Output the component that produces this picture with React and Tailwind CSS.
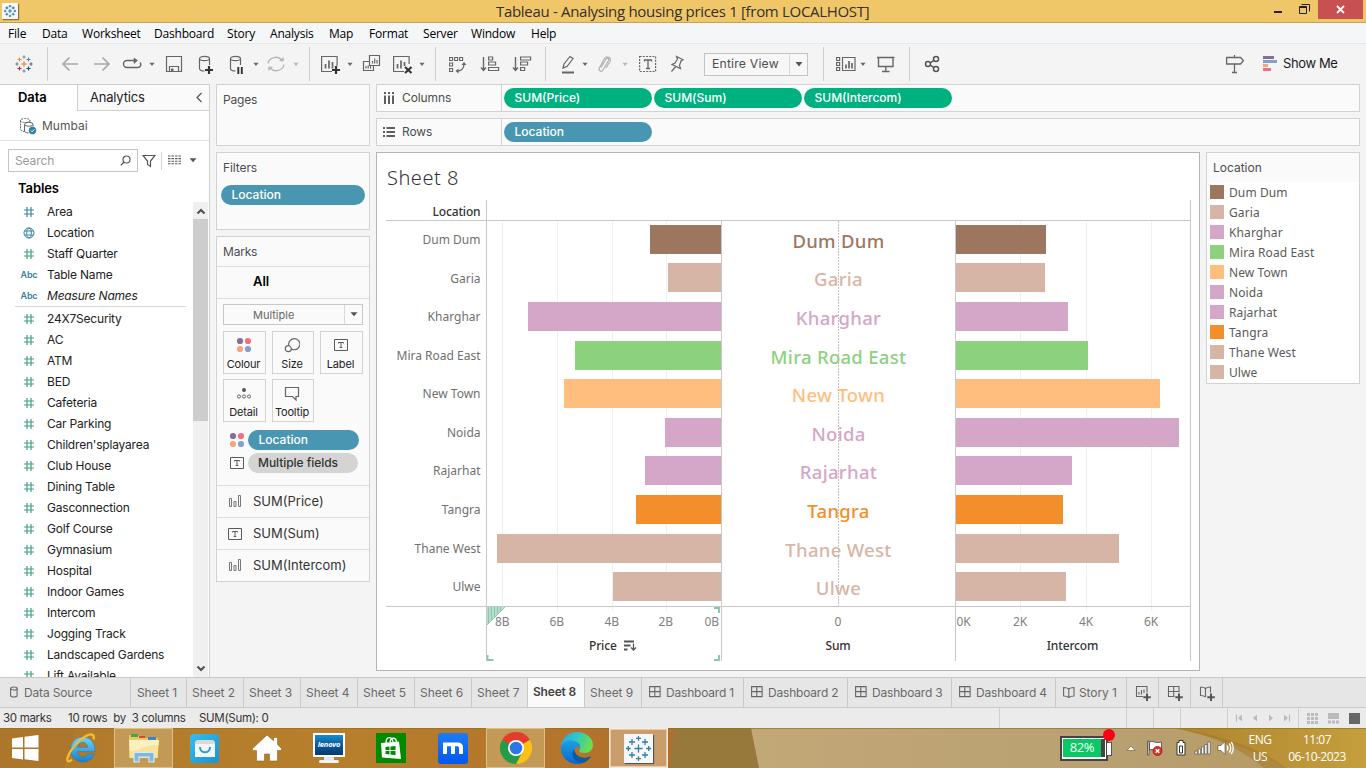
import React from "react";

const UI = "font-['Inter','Liberation_Sans',sans-serif]";
const SEGOE = "font-['Open_Sans','Noto_Sans',sans-serif]";

function Svg({ w = 20, h = 20, className = "", children, ...rest }) {
  return (
    <svg
      width={w}
      height={h}
      viewBox={`0 0 ${w} ${h}`}
      fill="none"
      stroke="#666"
      strokeWidth="1.2"
      className={`shrink-0 ${className}`}
      {...rest}
    >
      {children}
    </svg>
  );
}

const PLUS_POINTS = [
  [10, 10, 2.8],
  [10, 3, 1.7],
  [10, 17, 1.7],
  [3, 10, 1.7],
  [17, 10, 1.7],
  [5.5, 5.5, 2.1],
  [14.5, 5.5, 2.1],
  [5.5, 14.5, 2.1],
  [14.5, 14.5, 2.1],
];
const LOGO_COLORS = ["#e8762c", "#7199a6", "#7d8bb5", "#5b879b", "#5b6591", "#eb912c", "#59879b", "#c72035", "#1f447e"];

function TableauMark({ size = 20, color, className = "", thick = 1.1 }) {
  return (
    <svg width={size} height={size} viewBox="0 0 20 20" fill="none" strokeWidth={thick} className={`shrink-0 ${className}`}>
      {PLUS_POINTS.map(([x, y, r], i) => (
        <path key={i} d={`M${x - r} ${y}H${x + r}M${x} ${y - r}V${y + r}`} stroke={color || LOGO_COLORS[i]} />
      ))}
    </svg>
  );
}

function Caret({ className = "", color = "#666" }) {
  return (
    <svg width="8" height="20" viewBox="0 0 8 20" className={`shrink-0 ${className}`}>
      <path d="M1.5 8.8h5L4 12z" fill={color} />
    </svg>
  );
}

function Sep({ className = "" }) {
  return <div className={`h-[34px] w-px shrink-0 bg-[#cfcfcf] ${className}`} />;
}

function TitleBar() {
  return (
    <div className={`flex h-[23px] items-start border-b border-[#c9a251] bg-[#f0c768] ${SEGOE}`}>
      <div className="mt-[3px] ml-[2px] flex h-4 w-4 items-center justify-center bg-[#f7f7f7] shadow-[1px_1px_1px_#8a7038]">
        <TableauMark size={14} color="#2c7fb0" thick={1.5} />
      </div>
      <div className="ml-[478px] w-[376px] text-[15px] leading-[23px] tracking-[-0.31px] whitespace-nowrap text-[#33302a]">
        Tableau - Analysing housing prices 1 [from LOCALHOST]
      </div>
      <div className="mt-[11px] ml-[402px] h-[2px] w-2 bg-[#222]" />
      <Svg w={11} h={11} className="mt-1 ml-[17px]" stroke="#222" strokeWidth="1">
        <path d="M.5 2.5h7v7h-7zM.5 3.5h7M2.5 .5h8v7" />
      </Svg>
      <div className="ml-[8px] flex h-[19px] w-[45px] items-center justify-center bg-[#c75050]">
        <Svg w={9} h={9} stroke="#fff" strokeWidth="1.8">
          <path d="M1 1l7 7M8 1L1 8" />
        </Svg>
      </div>
    </div>
  );
}

function MenuBar() {
  const items = [
    ["File", "w-[34px]"],
    ["Data", "w-[40px]"],
    ["Worksheet", "w-[72px]"],
    ["Dashboard", "w-[73px]"],
    ["Story", "w-[43px]"],
    ["Analysis", "w-[59px]"],
    ["Map", "w-[40px]"],
    ["Format", "w-[54px]"],
    ["Server", "w-[48px]"],
    ["Window", "w-[60px]"],
    ["Help", "w-[40px]"],
  ];
  return (
    <div className={`flex h-[21px] items-center border-b border-[#e8e8e8] bg-[#f5f6f7] pt-[2px] pl-2 text-[12px] tracking-[-0.2px] text-black ${SEGOE}`}>
      {items.map(([t, w]) => (
        <div key={t} className={`${w} whitespace-nowrap`}>
          {t}
        </div>
      ))}
    </div>
  );
}

function Toolbar() {
  return (
    <div className="flex h-10 items-center bg-[#f4f4f4]">
      <TableauMark size={20} className="ml-[14px]" />
      <Sep className="ml-[13px]" />
      <Svg className="ml-3" stroke="#a9a9a9" strokeWidth="1.7">
        <path d="M18 10H3M9.5 3.5L3 10l6.5 6.5" />
      </Svg>
      <Svg className="ml-3" stroke="#a9a9a9" strokeWidth="1.7">
        <path d="M2 10h15M10.500 3.500L17 10l-6.500 6.500" />
      </Svg>
      <Svg className="ml-[10px]" strokeWidth="1.4">
        <path d="M14 6.500H5a3.500 3.500 0 0 0 0 7h10.500a3 3 0 0 0 2.500-5" />
        <path d="M12 4l3.500 2.500L12 9.500z" fill="#666" strokeWidth=".6" />
      </Svg>
      <Caret className="ml-[6px]" />
      <Svg className="ml-2">
        <path d="M2.500 2.500h15v15h-15zM5.500 17v-4.500h9V17" />
        <path d="M7 14.500h2.500V17H7z" fill="#666" stroke="none" />
      </Svg>
      <Svg className="ml-3">
        <path d="M3.500 5v9.500c0 1.500 2 2.500 5 2.500M13.500 5v6" />
        <ellipse cx="8.500" cy="4.500" rx="5" ry="2.200" />
        <path d="M13 12v8M9 16h8" stroke="#333" strokeWidth="2.200" />
      </Svg>
      <Svg className="ml-[11px]">
        <path d="M3.500 5v9.500c0 1.500 2 2.500 5 2.500M13.500 5v6" />
        <ellipse cx="8.500" cy="4.500" rx="5" ry="2.200" />
        <path d="M11.300 13v7M14.800 13v7" stroke="#333" strokeWidth="1.900" />
      </Svg>
      <Caret className="ml-[5px]" />
      <Svg className="ml-[6px]" stroke="#b5b5b5" strokeWidth="1.300">
        <path d="M2 9.500a8 7.500 0 0 1 14-3.500M18 10.500a8 7.500 0 0 1-14 3.500" />
        <path d="M17.500 3.500v3.500h-4zM2.500 16.500V13h4z" fill="#b5b5b5" strokeWidth=".5" />
      </Svg>
      <Caret className="ml-[6px]" color="#b5b5b5" />
      <Sep className="ml-[9px]" />
      <Svg className="ml-[11px]">
        <path d="M11 17.500H.600V2.500h15.500V12" />
        <path d="M4.500 14.500V10M8 14.500V6.500M11.500 14.500V8" strokeWidth="1.700" />
        <path d="M15 12v8M11 16h8" stroke="#333" strokeWidth="2.200" />
      </Svg>
      <Caret className="ml-[5px]" />
      <Svg className="ml-2">
        <path d="M7.500 1.500h10v10h-10zM7 7.500H1.500v9h10V12" />
        <path d="M10.500 9.500V7M12.700 9.500V4.500M15 9.500V6M4 14.500V12M6.200 14.500v-3M8.500 14.500V12" />
      </Svg>
      <Svg className="ml-[11px]">
        <path d="M11 17.500H.600V2.500h15.500V10" />
        <path d="M4.500 14.500V10M8 14.500V6.500M11.500 12V8" strokeWidth="1.700" />
        <path d="M12 13l6.500 6M18.500 13L12 19" stroke="#333" strokeWidth="2.100" />
      </Svg>
      <Caret className="ml-[5px]" />
      <Sep className="ml-[9px]" />
      <Svg className="ml-3">
        <path d="M1.600 3.500h3v3h-3zM6.600 3.500h3v3h-3zM11.600 3.500h3v3h-3zM1.600 9h3v3h-3zM1.600 14.500h3v3h-3z" strokeWidth="1.100" />
        <path d="M16 10c0 4-2.500 7-7 7" strokeWidth="1.300" />
        <path d="M13.500 11l2.500-3 2.500 3zM10.500 14.500L7.500 17l3 2.500z" fill="#666" stroke="none" />
      </Svg>
      <Svg className="ml-3">
        <path d="M3.500 3v13.500M1 13.500l2.500 3 2.500-3" strokeWidth="1.400" />
        <path d="M8.600 3h4v3h-4zM8.600 8h7v3h-7zM8.600 13.500h10v3h-10z" />
      </Svg>
      <Svg className="ml-3">
        <path d="M3.500 3v13.500M1 13.500l2.500 3 2.500-3" strokeWidth="1.400" />
        <path d="M8.600 3h10v3h-10zM8.600 8h7v3h-7zM8.600 13.500h4v3h-4z" />
      </Svg>
      <Sep className="ml-[13px]" />
      <Svg className="ml-3">
        <path d="M5 14l1-4 6-7.500 3 2-6 8zM5 14l3.500-1.500" />
        <path d="M4 18.500h12" strokeWidth="2" />
      </Svg>
      <Caret className="ml-[3px]" />
      <Svg className="ml-[6px]" stroke="#b5b5b5" strokeWidth="1.300">
        <path d="M6 13.500l5-8.500c1-1.500 3.500-.500 2.500 1.500l-5.500 9.500c-1.500 2.500-5 .500-3.700-2L9.500 4.500c2-3.200 7.500-1 5.500 3L11 14" />
      </Svg>
      <Caret className="ml-[6px]" color="#b5b5b5" />
      <Svg className="ml-[9px]">
        <path d="M1.600 2.500h16v15h-16z" strokeDasharray="2 1.200" />
        <path d="M6.500 7.500V6h7v1.500M10 6v8.500M8 14.500h4" strokeWidth="1.300" />
      </Svg>
      <Svg className="ml-[9px]">
        <path d="M9.500 2.500l6.500 3.200-2 1.300-1.500 4.500 1 3L5 10.500l3-1.500 2.500-4zM8.800 12.500L4.500 17.500" />
      </Svg>
      <div className={`ml-[17px] flex h-[23px] w-[104px] items-center border border-[#c4c4c4] bg-[#f7f7f7] text-[13px] text-[#4e4e4e] ${UI}`}>
        <div className="flex-1 pl-[7px] text-[12.200px] tracking-[0.2px] whitespace-nowrap">Entire View</div>
        <div className="flex h-full w-[18px] items-center justify-center border-l border-[#d9d9d9]">
          <svg width="8" height="5" viewBox="0 0 8 5">
            <path d="M.500 0h7L4 4.500z" fill="#555" />
          </svg>
        </div>
      </div>
      <Sep className="ml-[15px]" />
      <Svg w={22} className="ml-[11px]">
        <path d="M1.600 3.500h3v3h-3zM1.600 8.500h3v3h-3zM1.600 13.500h3v3h-3zM7.500 3.500h12.500v13H7.500z" />
        <path d="M11 14.500v-4M14 14.500V7M17 14.500V9" strokeWidth="1.700" />
      </Svg>
      <Caret className="ml-[2px]" />
      <Svg className="ml-[9px]">
        <path d="M1 3.500h17.500M2.500 3.500v9h14.500v-9M9.800 12.500v5M6 17.500h7.500" strokeWidth="1.400" />
      </Svg>
      <Sep className="ml-[13px]" />
      <Svg className="ml-3" strokeWidth="1.500" stroke="#555">
        <circle cx="6" cy="10" r="2.500" />
        <circle cx="14" cy="5" r="2.500" />
        <circle cx="14" cy="15" r="2.500" />
        <path d="M8 9l4-2.700M8 11l4 2.700" />
      </Svg>
      <Svg className="ml-[283px]" strokeWidth="1.300">
        <path d="M9.500 1v2.500M1.600 3.500h14l2.800 3-2.800 3.500h-14zM9.500 10v8.500M7 18.500h5" />
      </Svg>
      <Svg w={16} className="ml-[18px]" stroke="none">
        <path d="M0 2h11v3H0z" fill="#886d94" />
        <path d="M0 6h14v3H0z" fill="#81a1c9" />
        <path d="M0 10h5v3H0z" fill="#f4a67c" />
        <path d="M0 14h8v3H0z" fill="#f56d7e" />
      </Svg>
      <div className={`ml-1 text-[13px] tracking-[-0.4px] whitespace-nowrap text-[#1a1a1a] ${UI}`}>Show Me</div>
    </div>
  );
}

function HashIcon({ color }) {
  return (
    <Svg w={12} h={12} stroke={color} strokeWidth="1.200">
      <path d="M4 1v10M8 1v10M1 4h10M1 8h10" />
    </Svg>
  );
}

const DIMENSIONS = [
  ["Area", "hashBlue"],
  ["Location", "globe"],
  ["Staff Quarter", "hash"],
  ["Table Name", "abc"],
  ["Measure Names", "abc"],
];
const MEASURES = [
  "24X7Security",
  "AC",
  "ATM",
  "BED",
  "Cafeteria",
  "Car Parking",
  "Children'splayarea",
  "Club House",
  "Dining Table",
  "Gasconnection",
  "Golf Course",
  "Gymnasium",
  "Hospital",
  "Indoor Games",
  "Intercom",
  "Jogging Track",
  "Landscaped Gardens",
  "Lift Available",
];

function FieldRow({ name, kind }) {
  return (
    <div className="flex h-[21px] shrink-0 items-center">
      <div className="ml-[18px] flex w-[22px] justify-center">
        {kind === "hash" && <HashIcon color="#3fa37c" />}
        {kind === "hashBlue" && <HashIcon color="#3b86a3" />}
        {kind === "abc" && <span className="text-[9px] font-semibold tracking-[-0.2px] text-[#3b7f9b]">Abc</span>}
        {kind === "globe" && (
          <Svg w={12} h={12} stroke="#3b86a3" strokeWidth="1">
            <circle cx="6" cy="6" r="5" />
            <ellipse cx="6" cy="6" rx="2.300" ry="5" />
            <path d="M1.500 4h9M1.500 8h9" />
          </Svg>
        )}
      </div>
      <div className={`ml-[7px] text-[12px] tracking-[-0.2px] whitespace-nowrap text-[#222] ${name === "Measure Names" ? "italic" : ""}`}>{name}</div>
    </div>
  );
}

function DataPane() {
  return (
    <div className={`flex h-[593px] w-[210px] shrink-0 flex-col border-t border-r border-[#cfcfcf] bg-white ${UI}`}>
      <div className="flex h-[26px] shrink-0">
        <div className="w-[77px] pl-[18px] text-[13px] leading-[25px] font-semibold tracking-[-0.1px] text-black">Data</div>
        <div className="flex flex-1 items-center justify-between border-b border-l border-[#cfcfcf] bg-[#fafafa] pr-[6px] pl-3 text-[13px] tracking-[-0.2px] text-[#222]">
          Analytics
          <Svg w={8} h={12} stroke="#555" className="mb-px">
            <path d="M6.500 2L2 6.500 6.500 11" />
          </Svg>
        </div>
      </div>
      <div className="flex h-[30px] shrink-0 items-center border-b border-[#e0e0e0] pl-[19px] text-[12px] text-[#555]">
        <Svg w={18} h={18} strokeWidth="1">
          <path d="M1.500 3.500v9c0 1 2 2 4 2M11 3.500v1" strokeDasharray="2 1" />
          <ellipse cx="6.200" cy="3.500" rx="4.700" ry="2" strokeDasharray="2 1" />
          <path d="M5.500 7.500v6.500c0 1 1.500 2 4 2M14 7.500v2" />
          <ellipse cx="9.700" cy="7.300" rx="4.200" ry="2" />
          <circle cx="13.500" cy="13.500" r="3.700" fill="#2f7fa0" stroke="none" />
          <path d="M11.800 13.500l1.300 1.300 2.200-2.500" stroke="#fff" />
        </Svg>
        <span className="ml-[5px]">Mumbai</span>
      </div>
      <div className="mt-2 flex h-[23px] shrink-0 items-center pl-2">
        <div className="flex h-[23px] w-[130px] items-center justify-between border border-[#c4c4c4] pr-[6px] pl-[6px] text-[12px] tracking-[-0.1px] text-[#9a9a9a]">
          Search
          <Svg w={11} h={11} stroke="#555">
            <circle cx="6.500" cy="4.500" r="3.500" />
            <path d="M4 7L.800 10.300" />
          </Svg>
        </div>
        <Svg w={14} h={14} className="ml-1" stroke="#555">
          <path d="M1 1.500h12L8.500 7v5.500l-3-2V7z" />
        </Svg>
        <div className="ml-[5px] h-[18px] w-px bg-[#d4d4d4]" />
        <Svg w={13} h={11} className="ml-[6px]" stroke="#555" strokeWidth="1.100">
          <path d="M0 1h13M0 3.600h13M0 6.200h13M0 8.800h13" strokeDasharray="2.500 1" />
        </Svg>
        <Svg w={8} h={5} className="ml-2" stroke="none">
          <path d="M.500 .300h7L4 4.300z" fill="#555" />
        </Svg>
      </div>
      <div className="mt-[5px] h-[24px] shrink-0 pl-[18px] text-[13px] leading-[23px] font-semibold tracking-[-0.1px] text-black">Tables</div>
      <div className="flex min-h-0 flex-1">
        <div className="flex w-[193px] flex-col overflow-hidden">
          {DIMENSIONS.map(([n, k]) => (
            <FieldRow key={n} name={n} kind={k} />
          ))}
          <div className="mr-[7px] ml-[15px] mb-px h-px shrink-0 bg-[#d9d9d9]" />
          {MEASURES.map((n) => (
            <FieldRow key={n} name={n} kind="hash" />
          ))}
        </div>
        <div className="mt-px flex w-[15px] flex-col items-center bg-[#f0f0f0]">
          <div className="flex h-[17px] items-center">
            <Svg w={10} h={8} stroke="#505050" strokeWidth="2">
              <path d="M1.500 6.500L5 3l3.500 3.500" />
            </Svg>
          </div>
          <div className="h-[202px] w-full bg-[#cdcdcd]" />
          <div className="mt-auto mb-1">
            <Svg w={10} h={8} stroke="#505050" strokeWidth="2">
              <path d="M1.500 1.500L5 5l3.500-3.500" />
            </Svg>
          </div>
        </div>
      </div>
    </div>
  );
}

function ColourDots({ size = 16 }) {
  return (
    <svg width={size} height={size} viewBox="0 0 16 16" className="shrink-0">
      <circle cx="4" cy="4" r="3.100" fill="#886d94" />
      <circle cx="12" cy="4" r="3.100" fill="#f56d7e" />
      <circle cx="4" cy="12" r="3.100" fill="#f4a67c" />
      <circle cx="12" cy="12" r="3.100" fill="#81a1c9" />
    </svg>
  );
}

function TextBox() {
  return (
    <Svg w={14} h={12} stroke="#5a5a5a" strokeWidth="1">
      <path d="M.500 .500h13v11H.500z" />
      <path d="M4.500 4.500v-1h5v1M7 3.500v5M5.700 8.500h2.600" />
    </Svg>
  );
}

function MarkButton({ label, children }) {
  return (
    <div className="flex h-[43px] flex-col items-center border border-[#d2d2d2] bg-[#fafafa] pr-[2px]">
      <div className="mt-[5px] flex h-4 items-center">{children}</div>
      <div className="mt-[4px] text-[11px] leading-[15px] tracking-[-0.15px] whitespace-nowrap text-[#222]">{label}</div>
    </div>
  );
}

function BarsIcon() {
  return (
    <Svg w={14} h={14} stroke="#777" strokeWidth="1" className="mb-px">
      <path d="M1.500 4.500h2v8h-2zM6 7.500h2v5H6zM10.500 1.500h2v11h-2z" />
    </Svg>
  );
}

function MiddlePane() {
  const card = "border border-[#d2d2d2] bg-[#fafafa]";
  return (
    <div className={`ml-[6px] flex w-[154px] shrink-0 flex-col text-[#4e4e4e] ${UI}`}>
      <div className={`${card} h-[62px] pl-[6px] text-[12px] leading-[30px] tracking-[-0.2px]`}>Pages</div>
      <div className={`${card} mt-[6px] h-[78px] px-1`}>
        <div className="pl-[2px] text-[12px] leading-[30px] tracking-[-0.1px]">Filters</div>
        <div className="mt-[2px] h-5 rounded-full bg-[#4996b2] pl-[10.500px] text-[12px] leading-5 font-medium text-white">Location</div>
      </div>
      <div className={`${card} mt-[6px] h-[346px]`}>
        <div className="h-[30px] border-b border-[#dcdcdc] pl-[6px] text-[12px] leading-[30px] tracking-[-0.2px]">Marks</div>
        <div className="h-8 border-b border-[#dcdcdc] pl-9 text-[13px] leading-[29px] font-semibold text-black">All</div>
        <div className="mt-[5px] mr-[6px] ml-[6px] flex h-[21px] items-center border border-[#c8c8c8]">
          <div className="flex-1 pt-px pl-[29px] text-[11px] text-[#666]">Multiple</div>
          <div className="flex h-full w-[18px] items-center justify-center border-l border-[#d9d9d9]">
            <Svg w={8} h={5} stroke="none">
              <path d="M.500 .300h7L4 4.300z" fill="#555" />
            </Svg>
          </div>
        </div>
        <div className="mt-[6px] ml-[6px] grid grid-cols-[43px_42px_43px] gap-x-[6px] gap-y-[5px]">
          <MarkButton label="Colour">
            <ColourDots />
          </MarkButton>
          <MarkButton label="Size">
            <Svg w={16} h={16}>
              <path d="M4.800 8.300A5.600 5.600 0 1 1 7.500 12" />
              <circle cx="4.300" cy="11.700" r="3" />
            </Svg>
          </MarkButton>
          <MarkButton label="Label">
            <TextBox />
          </MarkButton>
          <MarkButton label="Detail">
            <Svg w={16} h={14} strokeWidth="1">
              <circle cx="8" cy="4" r="2" fill="#555" stroke="none" />
              <circle cx="3" cy="10.500" r="1.600" />
              <circle cx="8" cy="10.500" r="1.600" />
              <circle cx="13" cy="10.500" r="1.600" />
            </Svg>
          </MarkButton>
          <MarkButton label="Tooltip">
            <Svg w={16} h={16}>
              <path d="M1.500 2.500h13v9h-2.500v3.500L8.500 11.500h-7z" />
            </Svg>
          </MarkButton>
        </div>
        <div className="mt-[8px] flex items-center pl-3">
          <ColourDots />
          <div className="ml-[3px] h-5 w-[111px] rounded-full bg-[#4996b2] pl-[10.500px] text-[12px] leading-5 font-medium text-white">Location</div>
        </div>
        <div className="mt-[3px] flex items-center pl-[13px]">
          <TextBox />
          <div className="ml-1 h-5 w-[110px] rounded-full bg-[#d4d4d4] pl-[10px] text-[12px] leading-5 font-medium tracking-[-0.05px] text-[#333]">Multiple fields</div>
        </div>
        <div className="mt-3 text-[13px] tracking-[0px] text-[#333]">
          {[
            ["SUM(Price)", "bars"],
            ["SUM(Sum)", "text"],
            ["SUM(Intercom)", "bars"],
          ].map(([t, k]) => (
            <div key={t} className="flex h-8 items-center border-t border-[#dcdcdc] pl-[11px]">
              {k === "bars" ? <BarsIcon /> : <TextBox />}
              <span className="ml-[11px]">{t}</span>
            </div>
          ))}
        </div>
      </div>
    </div>
  );
}

function Shelf({ label, pills, className = "" }) {
  return (
    <div className={`flex h-[28px] w-[984px] border border-[#d2d2d2] bg-[#fafafa] ${className}`}>
      <div className="flex w-[125px] items-center border-r border-[#d2d2d2] pl-[6px] text-[12px] tracking-[-0.1px] text-[#4e4e4e]">
        {label === "Columns" ? (
          <Svg w={12} h={12} stroke="#5f5f5f" strokeWidth="2">
            <path d="M2 0v2M2 3.500V12M6 0v2M6 3.500V12M10 0v2M10 3.500V12" />
          </Svg>
        ) : (
          <Svg w={12} h={12} stroke="#5f5f5f" strokeWidth="2">
            <path d="M0 2h2M3.500 2H12M0 6h2M3.500 6H12M0 10h2M3.500 10H12" />
          </Svg>
        )}
        <span className="ml-[7px]">{label}</span>
      </div>
      <div className="flex items-center gap-[2px] pl-[2px]">
        {pills.map((p) => (
          <div
            key={p}
            className={`h-5 w-[148px] rounded-full pl-[10.500px] text-[12px] leading-5 font-medium text-white ${
              p === "Location" ? "bg-[#4996b2]" : "bg-[#00b180]"
            }`}
          >
            {p}
          </div>
        ))}
      </div>
    </div>
  );
}

const ROWS = [
  ["Dum Dum", "#9d7660", 650, 1046, 225],
  ["Garia", "#d7b5a6", 668, 1045, 263],
  ["Kharghar", "#d4a6c8", 528, 1068, 302],
  ["Mira Road East", "#8cd17d", 575, 1088, 341],
  ["New Town", "#ffbe7d", 564, 1160, 379],
  ["Noida", "#d4a6c8", 665, 1179, 418],
  ["Rajarhat", "#d4a6c8", 645, 1072, 456],
  ["Tangra", "#f28e2b", 636, 1063, 495],
  ["Thane West", "#d7b5a6", 497, 1119, 534],
  ["Ulwe", "#d7b5a6", 613, 1066, 572],
];

function Chart() {
  return (
    <svg width="822" height="472" viewBox="377 198 822 472" className="block font-['Noto_Sans','Open_Sans',sans-serif]">
      <g stroke="#f0f0f0" shapeRendering="crispEdges">
        {[502.5, 557.5, 612.5, 666.5, 1020.5, 1086.5, 1151.5].map((x) => (
          <path key={x} d={`M${x} 221V611`} />
        ))}
      </g>
      <g shapeRendering="crispEdges">
        {ROWS.map(([n, c, l, r, y]) => (
          <g key={n} fill={c}>
            <rect x={l} y={y} width={721 - l} height="29" />
            <rect x={956} y={y} width={r - 956} height="29" />
          </g>
        ))}
      </g>
      <path d="M838.5 221V606" stroke="#c0c0c0" strokeDasharray="2 1" />
      <g stroke="#c8c8c8" shapeRendering="crispEdges">
        <path d="M386 220.500H1190M386 606.500H1190M486.500 200V661M721.500 221V661M955.500 221V661M1190.500 200V661" />
      </g>
      <g fontSize="12" fill="#707070">
        {ROWS.map(([n, , , , y]) => (
          <text key={n} x="480.500" y={y + (n === "Garia" ? 20 : 19)} textAnchor="end">
            {n}
          </text>
        ))}
      </g>
      <g fontSize="18.500" fontWeight="500" letterSpacing=".3">
        {ROWS.map(([n, c, , , y]) => (
          <text key={n} x="838.500" y={y + 22.500} textAnchor="middle" fill={c}>
            {n}
          </text>
        ))}
      </g>
      <g fontSize="12" fill="#808080">
        <text x="495" y="626">8B</text>
        <text x="549.500" y="626">6B</text>
        <text x="604.500" y="626">4B</text>
        <text x="658.500" y="626">2B</text>
        <text x="704.500" y="626">0B</text>
        <text x="834.500" y="626">0</text>
        <text x="956.500" y="626">0K</text>
        <text x="1013" y="626">2K</text>
        <text x="1079" y="626">4K</text>
        <text x="1144" y="626">6K</text>
      </g>
      <g fontSize="12" fill="#333" fontWeight="500" letterSpacing="-.15">
        <text x="480.500" y="216" textAnchor="end">Location</text>
        <text x="589" y="650">Price</text>
        <text x="838" y="650" textAnchor="middle">Sum</text>
        <text x="1072.500" y="650" textAnchor="middle">Intercom</text>
      </g>
      <path d="M624 641.500h10M624 645.500h6.500M624 649.500h3.500" stroke="#555" strokeWidth="1.800" />
      <path d="M633.500 643.500v6M631 647.500l2.500 2.500 2.500-2.500" stroke="#555" strokeWidth="1.300" fill="none" />
      <path d="M487 607h18l-18 18z" fill="#bfe0d2" />
      <path d="M488.500 607v16M491.500 607v13M494.500 607v10M497.500 607v7M500.500 607v4" stroke="#8cc7b2" strokeWidth="1.300" />
      <path d="M505 607l-18 18" stroke="#8cc7b2" />
      <path d="M714 608h5v5M487.500 655v5h6M714 660h5v-5" fill="none" stroke="#8cc7b2" strokeWidth="2" />
    </svg>
  );
}

function Legend() {
  return (
    <div className="ml-[6px] h-[232px] w-[154px] border border-[#d2d2d2] bg-white font-['Noto_Sans','Open_Sans',sans-serif] text-[12px] text-[#5a5a5a]">
      <div className={`h-[29px] bg-[#fafafa] pl-[6px] leading-[30px] text-[#4e4e4e] ${UI}`}>Location</div>
      {ROWS.map(([n, c]) => (
        <div key={n} className="flex h-5 items-center pl-[3px]">
          <div className="h-[14px] w-[14px]" style={{ backgroundColor: c }} />
          <div className="ml-[5px] pt-[2px] tracking-[0.1px] whitespace-nowrap">{n}</div>
        </div>
      ))}
    </div>
  );
}

function Workspace() {
  return (
    <div className={`ml-[6px] flex flex-col ${UI}`}>
      <Shelf label="Columns" pills={["SUM(Price)", "SUM(Sum)", "SUM(Intercom)"]} />
      <Shelf label="Rows" pills={["Location"]} className="mt-[6px]" />
      <div className="mt-[6px] flex">
        <div className="flex h-[519px] w-[824px] flex-col border border-[#b4b4b4] bg-white">
          <div className="h-[45px] shrink-0 pl-[10px] font-['Noto_Sans','Open_Sans',sans-serif] text-[20px] leading-[49px] font-light tracking-[0.5px] text-[#333]">
            Sheet 8
          </div>
          <Chart />
        </div>
        <Legend />
      </div>
    </div>
  );
}

function GridIcon({ className = "" }) {
  return (
    <Svg w={12} h={12} className={className} stroke="#666" strokeWidth="1.100">
      <path d="M.600 .600h10.500v10H.600zM5.800 .600v10M.600 5.600h10.500" />
    </Svg>
  );
}
function BookIcon({ className = "" }) {
  return (
    <Svg w={12} h={12} className={className} stroke="#666" strokeWidth="1.100">
      <path d="M.600 1.500c2 0 3.500 0 5.200 1.500C7.500 1.500 9 1.500 11 1.500v8.500c-2 0-3.500 0-5.200 1.500C4.100 10 2.600 10 .600 10zM5.800 3v8" />
    </Svg>
  );
}

function SheetTabs() {
  const cell = "flex h-full items-center border-r border-[#c9c9c9] whitespace-nowrap";
  return (
    <div className={`flex h-[31px] border-t border-b border-[#c9c9c9] bg-[#e6e6e6] text-[12px] text-[#6a6a6a] ${UI}`}>
      <div className={`${cell} w-[131px] pl-[10px]`}>
        <Svg w={8} h={12} strokeWidth="1.100" className="mb-px">
          <path d="M.600 2.500v7c0 2 6.500 2 6.500 0v-7" />
          <ellipse cx="3.900" cy="2.500" rx="3.300" ry="1.500" />
        </Svg>
        <span className="ml-[6px] tracking-[-0.15px]">Data Source</span>
      </div>
      {[1, 2, 3, 4, 5, 6, 7, 8, 9].map((n) => (
        <div
          key={n}
          className={`${cell} ${n === 1 || n === 7 ? "w-[56px]" : "w-[57px]"} ${
            n === 8 ? "bg-[#fafafa] pb-[2px] pl-[5px] font-semibold tracking-[-0.2px] text-[#444]" : n === 1 ? "pl-[6px] tracking-[-0.15px]" : "pl-[5px] tracking-[-0.05px]"
          }`}
        >
          Sheet {n}
        </div>
      ))}
      {[1, 2, 3, 4].map((n) => (
        <div key={n} className={`${cell} ${n === 1 ? "w-[102px]" : "w-[104px]"} pl-[7px] tracking-[-0.2px]`}>
          <GridIcon className="mb-[2px]" />
          <span className="ml-[5px]">Dashboard {n}</span>
        </div>
      ))}
      <div className={`${cell} w-[71px] pl-[7px] tracking-[-0.1px]`}>
        <BookIcon className="mb-px" />
        <span className="ml-1">Story 1</span>
      </div>
      {["sheet", "dash", "story"].map((k) => (
        <div key={k} className={`${cell} w-8 justify-center`}>
          <Svg w={16} h={16} strokeWidth="1.100">
            {k === "sheet" && <path d="M8 11.500H1.500V1.500h10.500v6M4 9.500V7M6.500 9.500V5M9 8V4.500" />}
            {k === "dash" && <path d="M7.500 11.500H1.500V1.500h10.500v6M6.700 1.500v10M1.500 6.500H12" />}
            {k === "story" && <path d="M1.500 2c2 0 3.500 0 5 1.500C8 2 9.500 2 11.500 2v5.500M1.500 2v8.500c2 0 3.500 0 5 1.500M6.500 3.500V12" />}
            <path d="M12 8.500v7.500M8.300 12.200h7.500" stroke="#555" strokeWidth="2" />
          </Svg>
        </div>
      ))}
    </div>
  );
}

function StatusBar() {
  return (
    <div className={`flex h-5 bg-[#ebebeb] text-[11.500px] leading-5 tracking-[-0.3px] text-[#333] ${UI}`}>
      <div className="w-[65px] pl-[3px] whitespace-nowrap">30 marks</div>
      <div className="w-[134px] pl-[3px] whitespace-nowrap">10 rows&nbsp; by&nbsp; 3 columns</div>
      <div className="w-[801px] border-r border-[#cfcfcf]">SUM(Sum): 0</div>
      <div className="w-[127px] border-r border-[#cfcfcf]" />
      <div className="w-[27px] border-r border-[#cfcfcf]" />
      <div className="w-[27px] border-r border-[#cfcfcf]" />
      <div className="w-[47px] border-r border-[#cfcfcf]" />
      <div className="flex w-[71px] items-center gap-[8px] border-r border-[#cfcfcf] pl-[7px]">
        <Svg w={8} h={8} stroke="#bbb">
          <path d="M1.500 .500v7" />
          <path d="M7 .500v7L3 4z" fill="#bbb" stroke="none" />
        </Svg>
        <Svg w={8} h={8} stroke="none">
          <path d="M6 .500v7L2 4z" fill="#bbb" />
        </Svg>
        <Svg w={8} h={8} stroke="none">
          <path d="M2 .500v7L6 4z" fill="#bbb" />
        </Svg>
        <Svg w={8} h={8} stroke="#bbb">
          <path d="M6.500 .500v7" />
          <path d="M1 .500v7L5 4z" fill="#bbb" stroke="none" />
        </Svg>
      </div>
      <div className="flex items-center pl-2">
        <Svg w={11} h={11} stroke="#bbb" strokeWidth="3">
          <path d="M0 1.500h11M0 5.500h11M0 9.500h11" strokeDasharray="3 1" />
        </Svg>
        <Svg w={11} h={11} className="ml-[10px]" stroke="#bbb">
          <path d="M0 0h11v6H0z" fill="#bbb" stroke="none" />
          <path d="M0 9h11" strokeWidth="3" strokeDasharray="3 1" />
        </Svg>
        <div className="ml-[10px] h-[11px] w-[11px] bg-[#666]" />
      </div>
    </div>
  );
}

function TaskIcon({ active, bright, children, className = "" }) {
  return (
    <div
      className={`flex h-10 w-[59px] shrink-0 items-center justify-center ${
        active ? (bright ? "border border-[#f7ead8] bg-[#c99e6c] outline -outline-offset-2 outline-[#f7ead8]/60" : "border border-[#dcc08c] bg-[#c39a55]") : ""
      } ${className}`}
    >
      {children}
    </div>
  );
}

function Taskbar() {
  return (
    <div className={`relative h-10 overflow-hidden ${SEGOE}`}>
      <svg width="1366" height="40" viewBox="0 0 1366 40" className="absolute inset-0" preserveAspectRatio="none">
        <defs>
          <linearGradient id="wood" x1="0" x2="1">
            <stop offset="0" stopColor="#b07a2c" />
            <stop offset=".5" stopColor="#b77f2b" />
            <stop offset="1" stopColor="#b26f2c" />
          </linearGradient>
          <linearGradient id="sand" x1="0" x2="1">
            <stop offset="0" stopColor="#c2a877" />
            <stop offset=".6" stopColor="#b9a072" />
            <stop offset="1" stopColor="#b6995d" />
          </linearGradient>
          <linearGradient id="gold" x1="0" x2="1">
            <stop offset="0" stopColor="#ae842f" />
            <stop offset="1" stopColor="#c49f3c" />
          </linearGradient>
        </defs>
        <rect width="675" height="40" fill="url(#wood)" />
        <path d="M0 0h76L64 40H0z" fill="#a8702a" opacity=".4" />
        <path d="M674 0h78l8 40h-90z" fill="#98793c" />
        <path d="M751 0h615v40H759z" fill="url(#sand)" />
        <path d="M1175 0h191v40h-80c-40-22-70-30-111-40z" fill="url(#gold)" />
        <path d="M1175 0c50 8 85 20 111 40h-22c-25-20-50-32-89-40z" fill="#a47622" opacity=".5" />
        <rect width="1366" height="1" fill="#8b6a2c" opacity=".6" />
      </svg>
      <div className="relative flex h-10 items-center">
        <Svg w={28} h={28} className="ml-[11px]" stroke="none">
          <path d="M1 4.500L12 3v10.500H1zM13.500 2.700L27.500 1v12.500h-14zM1 15h11v10.500L1 24zM13.500 15h14v12l-14-1.700z" fill="#fff" />
        </Svg>
        <Svg w={32} h={32} className="ml-[26px]" stroke="none">
          <defs>
            <linearGradient id="ieBlue" x1="0" y1="0" x2="0" y2="1">
              <stop offset="0" stopColor="#6fd3f7" />
              <stop offset="1" stopColor="#1b7fcb" />
            </linearGradient>
          </defs>
          <path
            d="M17.500 5C10.500 5 5.500 10.500 5.500 17.500S10.500 30 18 30c5.500 0 9.500-3 11.500-8h-7c-1 1.800-2.500 2.700-4.500 2.700-3.200 0-5.300-2-5.500-5H30C30.700 11 25.500 5 17.500 5zM12.500 15.300c.500-3 2.500-4.800 5.200-4.800s4.700 1.800 5 4.800z"
            fill="url(#ieBlue)"
            stroke="#1f74b5"
            strokeWidth=".5"
          />
          <path d="M7 27.500c-3.500 3.500-6 2-4-3C5.500 17.500 13 8.500 20 4.500c6-3.500 10-2.500 8.500 3" stroke="#f4bd2c" strokeWidth="2.300" />
        </Svg>
        <TaskIcon active className="ml-[17px]">
          <Svg w={34} h={34} stroke="none">
            <path d="M2 4h9l2 3h18v20H2z" fill="#e8c866" />
            <path d="M4 3h7v3H4z" fill="#3bab4a" />
            <path d="M12 5h6v2h-6z" fill="#d64a3a" />
            <path d="M21 6h8v3h-8z" fill="#3e84ca" />
            <path d="M2 9h30l-1.500 18H3z" fill="#f8e39c" />
            <path d="M2 9h30l-.500 5C20 13 12 20 3 20z" fill="#fcefc0" />
            <path d="M7 31V21.500h20V31h-5v-5H12v5z" fill="#7fb9dd" stroke="#d4ecf8" />
          </Svg>
        </TaskIcon>
        <div className="ml-[17px] flex h-[29px] w-[29px] items-center justify-center rounded bg-gradient-to-br from-[#36bdea] to-[#1793d4]">
          <Svg w={22} h={22} stroke="none">
            <path d="M1 5h20v15H1z" fill="#f5f5f5" />
            <path d="M1 5l2-2h16l2 2v2H1z" fill="#dadada" />
            <path d="M6 10c0 7 10 7 10 0" stroke="#2b9fd8" strokeWidth="2" />
          </Svg>
        </div>
        <Svg w={32} h={30} className="ml-[32px]" stroke="none">
          <path d="M16 2L1 16l1.500 1.500H5.500V28h8v-7h5v7h8V17.500h3L31 16l-4.500-4.500V4.500h-4v3.200z" fill="#fff" stroke="#8f6425" strokeWidth=".6" />
        </Svg>
        <div className="ml-[30px] flex w-8 flex-col items-center">
          <div className="flex h-[24px] w-8 items-center justify-center border-2 border-white bg-gradient-to-b from-[#1a8fcb] via-[#0a5a9d] to-[#073a6d] font-['Open_Sans',sans-serif] text-[7.500px] font-bold tracking-[-0.2px] text-white italic">
            lenovo
          </div>
          <div className="h-[3px] w-[10px] bg-[#dfe8ee]" />
          <div className="h-[3px] w-5 rounded-sm bg-[#f2f2f2]" />
        </div>
        <div className="ml-[31px] flex h-[30px] w-[30px] items-center justify-center bg-[#008a00]">
          <Svg w={24} h={26} stroke="none">
            <path d="M2 8l18-1.500L22 24 3 22.500z" fill="#fff" />
            <path d="M7 8C7 1 13 1 14 7M11 7c1-5 6-5 6.500 0" stroke="#fff" strokeWidth="1.300" />
            <path d="M6.500 12l4-.400V15h-4zM11.500 11.500l5-.500v4h-5zM6.500 16h4v3.500l-4-.400zM11.500 16h5v4.200l-5-.600z" fill="#008a00" />
          </Svg>
        </div>
        <div className="ml-[32px] flex h-[31px] w-[30px] items-center justify-center rounded-[3px] bg-gradient-to-b from-[#1d7bf5] to-[#0757f0]">
          <Svg w={22} h={16} stroke="none">
            <path d="M1 14V2.500h14.500c3.500 0 5.500 1.500 5.500 4.500v7h-4V8c0-1-.500-1.700-1.700-1.700H13V14H9V6.300H5V14z" fill="#fff" />
          </Svg>
        </div>
        <TaskIcon active className="ml-[18px]">
          <Svg w={32} h={32} stroke="none">
            <path d="M16 16L2.140 8A16 16 0 0 1 29.860 8z" fill="#e33b2e" />
            <path d="M16 16L29.860 8A16 16 0 0 1 16 32z" fill="#fbc116" />
            <path d="M16 16l6.500 4L16 32A16 16 0 0 1 2.140 8z" fill="#259b48" />
            <path d="M16 16L2.140 8l6 10z" fill="#259b48" />
            <circle cx="16" cy="16" r="8" fill="#fff" />
            <circle cx="16" cy="16" r="6.300" fill="#2b77e8" />
          </Svg>
        </TaskIcon>
        <Svg w={32} h={32} className="ml-[16px]" stroke="none">
          <defs>
            <linearGradient id="edgeTop" x1="0" y1="0" x2="1" y2=".3">
              <stop offset="0" stopColor="#23a6e5" />
              <stop offset=".5" stopColor="#31c5c9" />
              <stop offset="1" stopColor="#67e04f" />
            </linearGradient>
            <linearGradient id="edgeBody" x1="0" y1="0" x2="0" y2="1">
              <stop offset="0" stopColor="#1fa0e5" />
              <stop offset="1" stopColor="#0868ce" />
            </linearGradient>
          </defs>
          <path d="M0 15C1 5 8 0 16 0c9 0 16 6 16 13 0 5-4 8-8 8s-6-1-6-2 2-2 1-5C17 9 6 7 0 15z" fill="url(#edgeTop)" />
          <path d="M0 15C2 9 7 7.500 12 8.500c5 1 7.500 4 7 7-3-2-7 1-6 6 1 6 5 9 9 9.500C11 35-1 27 0 15z" fill="url(#edgeBody)" />
          <path d="M13 17c-4 5 0 14 9 14 4-1.500 7-4.500 8-7-7 4-16 1-17-7z" fill="#0c59a4" />
        </Svg>
        <TaskIcon active bright className="ml-[16px]">
          <div className="flex h-[29px] w-[29px] items-center justify-center bg-[#f7f7f7] shadow-[1px_1px_1px_#555]">
            <TableauMark size={29} color="#2c7fb0" thick={0.9} />
          </div>
        </TaskIcon>
        <div className="relative ml-[392px] flex h-[25px] w-[48px] items-center border-2 border-[#444] bg-white p-[1px]">
          <div className="flex h-[18px] w-[38px] items-center justify-center bg-[#0ac864] text-[13px] tracking-[-0.4px] text-white">82%</div>
          <div className="h-[18px] w-[4px] bg-[#444]" />
          <div className="absolute top-[4px] -right-[6px] h-[14px] w-[5px] border border-l-0 border-[#555] bg-white" />
          <div className="absolute -top-[9px] -right-[9px] h-3 w-3 rounded-full bg-[#fb0014]" />
        </div>
        <Svg w={10} h={6} className="ml-[18px]" stroke="#6b5426" strokeWidth=".6">
          <path d="M1 5.500L5 1l4 4.500z" fill="#fff" />
        </Svg>
        <Svg w={18} h={18} className="ml-[10px]" stroke="#444" strokeWidth=".8">
          <path d="M1.500 2h1.500v14H1.500zM3.500 3c4-2 5 2 12 0v8c-6 2-8-1.500-12 0z" fill="#fff" />
          <circle cx="11.500" cy="12" r="4.500" fill="#d8342b" stroke="#a11" />
          <path d="M9.700 10.200l3.600 3.600M13.300 10.200l-3.600 3.600" stroke="#fff" strokeWidth="1.500" />
        </Svg>
        <Svg w={12} h={18} className="ml-[11px]" stroke="#333" strokeWidth="1">
          <path d="M4 1.500h4v2h2v12.500H2V3.500h2z" fill="#fff" />
          <path d="M4.500 7h3v7h-3z" fill="#fff" />
        </Svg>
        <Svg w={17} h={14} className="ml-[7px]" stroke="#444" strokeWidth=".6">
          <path d="M1 10h2.300v3H1zM4.300 8h2.300v5H4.300zM7.500 6h2.300v7H7.500zM10.700 3.500H13V13h-2.300zM13.900 1h2.300v12h-2.300z" fill="#fff" />
        </Svg>
        <Svg w={18} h={16} className="ml-[6px]" stroke="#444" strokeWidth=".6">
          <path d="M1 5.500h3L8 1.500v13L4 10.500H1z" fill="#fff" />
          <path d="M10 5.500c1 1.500 1 3.500 0 5M12.200 3.500c2 2.500 2 6.500 0 9M14.300 2c2.600 3.500 2.600 8.500 0 12" stroke="#fff" strokeWidth="1.300" />
        </Svg>
        <div className="ml-[11px] w-[28px] text-center text-[12px] leading-[17px] tracking-[-0.4px] text-white">
          ENG
          <br />
          US
        </div>
        <div className="ml-[9px] w-[68px] text-center text-[12px] leading-[17px] tracking-[-0.5px] whitespace-nowrap text-white">
          11:07
          <br />
          06-10-2023
        </div>
      </div>
    </div>
  );
}

export default function App() {
  return (
    <div className="flex h-[768px] w-[1366px] flex-col overflow-hidden bg-[#f4f4f4]">
      <TitleBar />
      <MenuBar />
      <Toolbar />
      <div className="flex h-[593px] shrink-0">
        <DataPane />
        <MiddlePane />
        <Workspace />
      </div>
      <SheetTabs />
      <StatusBar />
      <Taskbar />
    </div>
  );
}
